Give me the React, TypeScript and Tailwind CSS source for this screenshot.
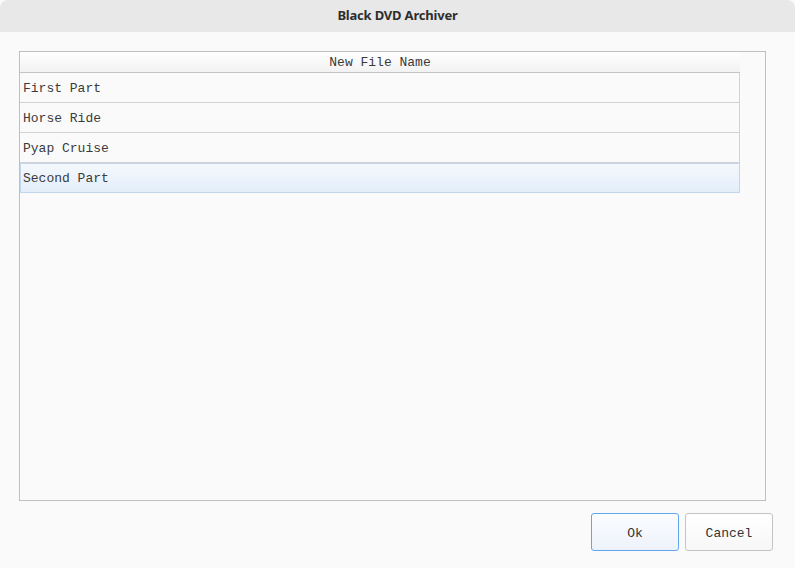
import React from "react";

const rows = ["First Part", "Horse Ride", "Pyap Cruise"];

export default function App() {
  return (
    <div className="w-[795px] h-[568px] bg-[#fafafa] flex flex-col overflow-hidden">
      <div className="h-[32px] bg-[#e8e8e8] rounded-t-[8px] flex items-center justify-center shrink-0">
        <span className="text-[13px] font-bold text-[#2e2e2e] [font-family:'Noto_Sans',sans-serif] tracking-[-0.2px]">
          Black DVD Archiver
        </span>
      </div>
      <div className="flex flex-col pt-[19px] pl-[19px] pr-[29px] [font-family:'Liberation_Mono',monospace] text-[13px] text-[#3a3a3a]">
        <div className="h-[450px] border border-[#bfbfbf] bg-[#fafafa]">
          <div className="w-[720px] flex flex-col">
            <div className="h-[21px] pt-[2px] border-b border-[#c4c4c4] bg-gradient-to-b from-[#ffffff] to-[#f2f2f2] flex items-center justify-center">
              New File Name
            </div>
            {rows.map((r) => (
              <div
                key={r}
                className="h-[30px] pt-[2px] border-b border-r border-[#d2d2d2] flex items-center pl-[3px]"
              >
                {r}
              </div>
            ))}
            <div className="h-[30px] pt-[2px] border border-[#c3d7ec] bg-gradient-to-b from-[#f4f8fd] to-[#e3eefa] flex items-center pl-[2px]">
              Second Part
            </div>
          </div>
        </div>
        <div className="flex justify-end gap-[6px] mt-[12px] mr-[-7px]">
          <button className="w-[88px] h-[38px] pt-[3px] rounded-[3px] border border-[#5fa6ef] bg-gradient-to-b from-[#fcfdff] to-[#edf2fa] text-[#333]">
            Ok
          </button>
          <button className="w-[88px] h-[38px] pt-[3px] rounded-[3px] border border-[#c4c4c4] bg-gradient-to-b from-[#ffffff] to-[#f7f7f7] text-[#333]">
            Cancel
          </button>
        </div>
      </div>
    </div>
  );
}
